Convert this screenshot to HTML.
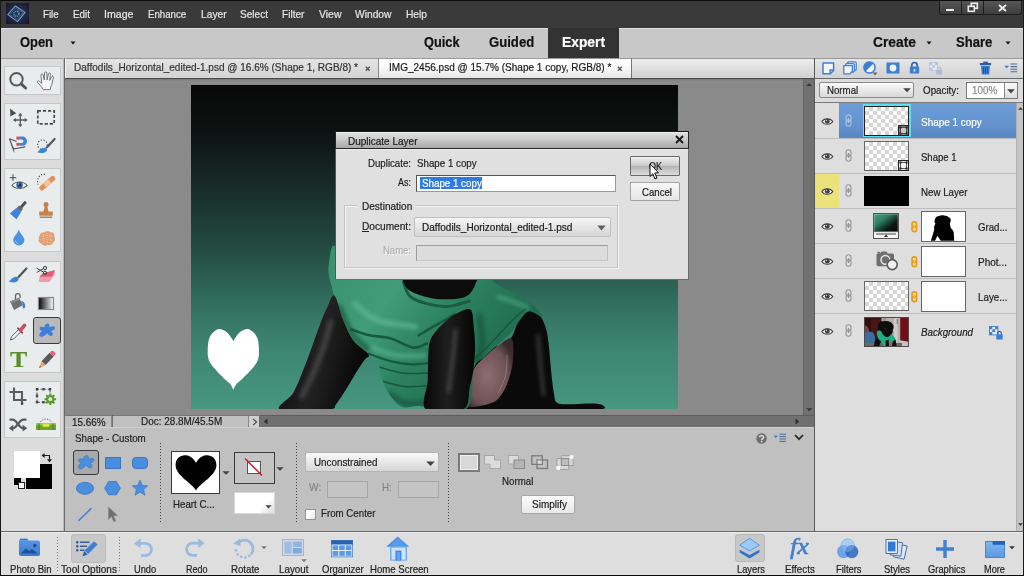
<!DOCTYPE html>
<html><head><meta charset="utf-8"><title>Photoshop Elements</title>
<style>
html,body{margin:0;padding:0;}
body{width:1024px;height:576px;overflow:hidden;position:relative;background:#8a8a8a;font-family:"Liberation Sans",sans-serif;}
.b{position:absolute;box-sizing:border-box;display:block;}
.t{position:absolute;white-space:pre;line-height:1;transform-origin:0 0;font-family:"Liberation Sans",sans-serif;-webkit-text-stroke:0.2px currentColor;}
</style></head><body>
<!-- p_base -->
<div class="b" style="left:0px;top:0px;width:1024px;height:28px;background:#3a3a3a;border-top:1px solid #1c1c1c;"></div>
<svg class="b" style="left:6px;top:2.5px;" width="23" height="21" viewBox="0 0 23 21"><defs><radialGradient id="lg" cx="0.5" cy="0.5" r="0.7"><stop offset="0" stop-color="#34365c"/><stop offset="1" stop-color="#15162c"/></radialGradient></defs><rect width="23" height="21" fill="url(#lg)"/><g fill="none"><polygon points="1.9,11.6 9.3,3 19,9.4 11.6,18.6" stroke="#6aa6c4" stroke-width="1.1"/><polygon points="4,11.4 9.6,5 16.9,9.8 11.3,16.4" stroke="#3f6f8e" stroke-width="0.7"/><circle cx="10.4" cy="10.7" r="2.6" stroke="#38a8ea" stroke-width="1.3" stroke-dasharray="1.3 0.8"/></g></svg>
<span class="t" style="left:43.00px;top:9px;font-size:10.9px;color:#e6e6e6;transform:scaleX(0.8939);">File</span>
<span class="t" style="left:72.50px;top:9px;font-size:10.9px;color:#e6e6e6;transform:scaleX(0.9051);">Edit</span>
<span class="t" style="left:103.75px;top:9px;font-size:10.9px;color:#e6e6e6;transform:scaleX(0.9737);">Image</span>
<span class="t" style="left:147.50px;top:9px;font-size:10.9px;color:#e6e6e6;transform:scaleX(0.8889);">Enhance</span>
<span class="t" style="left:201.25px;top:9px;font-size:10.9px;color:#e6e6e6;transform:scaleX(0.9444);">Layer</span>
<span class="t" style="left:240.00px;top:9px;font-size:10.9px;color:#e6e6e6;transform:scaleX(0.9242);">Select</span>
<span class="t" style="left:282.25px;top:9px;font-size:10.9px;color:#e6e6e6;transform:scaleX(0.9289);">Filter</span>
<span class="t" style="left:318.50px;top:9px;font-size:10.9px;color:#e6e6e6;transform:scaleX(0.9603);">View</span>
<span class="t" style="left:354.75px;top:9px;font-size:10.9px;color:#e6e6e6;transform:scaleX(0.9415);">Window</span>
<span class="t" style="left:405.50px;top:9px;font-size:10.9px;color:#e6e6e6;transform:scaleX(0.9367);">Help</span>
<div class="b" style="left:939px;top:0px;width:83px;height:15px;background:linear-gradient(#585858,#3e3e3e);border:1px solid #1a1a1a;border-top:none;border-radius:0 0 3px 3px;"></div>
<div class="b" style="left:961px;top:1px;width:1px;height:13px;background:#1e1e1e;"></div>
<div class="b" style="left:983px;top:1px;width:1px;height:13px;background:#1e1e1e;"></div>
<div class="b" style="left:946px;top:9px;width:8px;height:2px;background:#f0f0f0;"></div>
<svg class="b" style="left:967px;top:2px;" width="12" height="11" viewBox="0 0 12 11"><g fill="none" stroke="#f0f0f0" stroke-width="1.6"><rect x="4.3" y="1.3" width="6" height="5"/><rect x="1.3" y="4.3" width="6" height="5" fill="#3e3e3e"/></g></svg>
<svg class="b" style="left:997.7px;top:3.6px;" width="9" height="8" viewBox="0 0 9 8"><path d="M1,1 L8,7 M8,1 L1,7" stroke="#f0f0f0" stroke-width="1.9" fill="none"/></svg>
<div class="b" style="left:0px;top:28px;width:1024px;height:30px;background:#c8c8c8;border-top:1px solid #dedede;"></div>
<div class="b" style="left:548px;top:28px;width:71px;height:30px;background:#333;"></div>
<span class="t" style="left:19.50px;top:35px;font-size:14px;color:#111;transform:scaleX(0.9224);font-weight:bold;">Open</span>
<svg class="b" style="left:70px;top:41px;" width="6" height="4" viewBox="0 0 6 4"><polygon points="0.5,0.5 5.5,0.5 3,3.6" fill="#111"/></svg>
<span class="t" style="left:423.80px;top:35px;font-size:14px;color:#111;transform:scaleX(0.9126);font-weight:bold;">Quick</span>
<span class="t" style="left:489.30px;top:35px;font-size:14px;color:#111;transform:scaleX(0.9374);font-weight:bold;">Guided</span>
<span class="t" style="left:562.00px;top:35px;font-size:14px;color:#fff;transform:scaleX(0.9869);font-weight:bold;">Expert</span>
<span class="t" style="left:872.50px;top:35px;font-size:14px;color:#111;transform:scaleX(0.9867);font-weight:bold;">Create</span>
<svg class="b" style="left:926px;top:41px;" width="6" height="4" viewBox="0 0 6 4"><polygon points="0.5,0.5 5.5,0.5 3,3.6" fill="#111"/></svg>
<span class="t" style="left:955.50px;top:35px;font-size:14px;color:#111;transform:scaleX(0.9329);font-weight:bold;">Share</span>
<svg class="b" style="left:1005px;top:41px;" width="6" height="4" viewBox="0 0 6 4"><polygon points="0.5,0.5 5.5,0.5 3,3.6" fill="#111"/></svg>
<div class="b" style="left:0px;top:28px;width:1px;height:548px;background:#555;"></div>
<div class="b" style="left:65px;top:58px;width:749px;height:20px;background:linear-gradient(#ececec,#d2d2d2);border-top:1px solid #9a9a9a;"></div>
<div class="b" style="left:65px;top:58px;width:314px;height:20px;background:linear-gradient(#e4e4e4,#d4d4d4);border-top:1px solid #9a9a9a;border-right:1px solid #8a8a8a;border-left:1px solid #f4f4f4;"></div>
<div class="b" style="left:379px;top:58px;width:253px;height:20px;background:linear-gradient(#ffffff 30%,#e6e6e6);border-top:1px solid #9a9a9a;border-right:1px solid #777;"></div>
<span class="t" style="left:74.30px;top:62px;font-size:10.6px;color:#333;transform:scaleX(0.9477);">Daffodils_Horizontal_edited-1.psd @ 16.6% (Shape 1, RGB/8) *</span>
<span class="t" style="left:388.50px;top:62px;font-size:10.6px;color:#1a1a1a;transform:scaleX(0.9466);">IMG_2456.psd @ 15.7% (Shape 1 copy, RGB/8) *</span>
<svg class="b" style="left:365px;top:65.5px;" width="5.5" height="5.5" viewBox="0 0 5.5 5.5"><path d="M0.8,0.8 L4.7,4.7 M4.7,0.8 L0.8,4.7" stroke="#555" stroke-width="1.4" fill="none"/></svg>
<svg class="b" style="left:617.3px;top:65.5px;" width="5.5" height="5.5" viewBox="0 0 5.5 5.5"><path d="M0.8,0.8 L4.7,4.7 M4.7,0.8 L0.8,4.7" stroke="#555" stroke-width="1.4" fill="none"/></svg>
<div class="b" style="left:65px;top:78px;width:749px;height:1px;background:#4a4a4a;"></div>
<div class="b" style="left:65px;top:79px;width:738px;height:2px;background:linear-gradient(#777,#8a8a8a);"></div>
<!-- p_canvas -->
<svg class="b" style="left:191px;top:85px;" width="487" height="324" viewBox="0 0 487 324"><defs>
<linearGradient id="bg" x1="0" y1="0" x2="0" y2="1">
<stop offset="0" stop-color="#080808"/><stop offset="0.15" stop-color="#0d1312"/><stop offset="0.35" stop-color="#1a322c"/><stop offset="0.5" stop-color="#234a40"/><stop offset="0.65" stop-color="#306a5a"/><stop offset="0.8" stop-color="#3c8470"/><stop offset="1" stop-color="#48977f"/></linearGradient>
<linearGradient id="sw" x1="0" y1="0" x2="1" y2="0.6"><stop offset="0" stop-color="#38906e"/><stop offset="0.35" stop-color="#419c7a"/><stop offset="0.6" stop-color="#2c8060"/><stop offset="1" stop-color="#1d664c"/></linearGradient>
<linearGradient id="leg" x1="0" y1="0" x2="1" y2="0"><stop offset="0" stop-color="#070707"/><stop offset="0.45" stop-color="#1e1e1e"/><stop offset="1" stop-color="#060606"/></linearGradient>
<linearGradient id="leg2" x1="0" y1="0" x2="1" y2="0.3"><stop offset="0" stop-color="#050505"/><stop offset="0.55" stop-color="#222"/><stop offset="1" stop-color="#080808"/></linearGradient>
<radialGradient id="belly" cx="0.45" cy="0.55" r="0.6"><stop offset="0" stop-color="#8e6e70"/><stop offset="0.7" stop-color="#6e5256"/><stop offset="1" stop-color="#3a2a2c"/></radialGradient>
<filter id="bl" x="-20%" y="-20%" width="140%" height="140%"><feGaussianBlur stdDeviation="0.7"/></filter>
<filter id="bl2" x="-30%" y="-30%" width="160%" height="160%"><feGaussianBlur stdDeviation="2.2"/></filter>
<clipPath id="swc"><path d="M141.1,162.1 C139.6,164.6 138.8,171.9 138.2,176.2 C137.6,180.5 137.2,183.8 137.6,187.9 C138.0,192.1 139.6,197.2 140.6,201.1 C141.5,205.0 141.6,205.8 143.5,211.4 C145.4,217.0 148.9,227.5 152.0,234.8 C155.1,242.1 158.1,249.6 162.2,255.3 C166.4,261.1 172.7,265.5 176.9,269.4 C181.0,273.3 184.9,275.2 187.1,278.8 C189.3,282.3 188.9,286.6 190.1,290.5 C191.3,294.4 192.5,298.3 194.5,302.2 C196.4,306.1 198.9,310.6 201.8,313.9 C204.7,317.2 207.9,320.9 212.0,322.1 C216.2,323.3 221.8,320.8 226.7,320.9 C231.6,321.0 233.0,322.4 241.3,322.7 C249.6,323.0 269.6,329.3 276.5,322.7 C283.4,316.1 280.0,291.7 282.9,283.1 C285.9,274.6 290.3,275.2 294.1,271.4 C297.9,267.7 301.4,264.6 305.8,260.6 C310.2,256.5 316.5,251.4 320.4,247.1 C324.4,242.8 326.3,238.3 329.2,234.8 C332.2,231.3 334.4,226.8 338.0,226.3 C341.7,225.8 350.1,232.6 351.2,231.9 C352.3,231.1 347.2,224.8 344.5,221.9 C341.8,219.0 338.6,216.5 335.1,214.3 C331.6,212.1 327.3,210.4 323.4,208.4 C319.5,206.5 315.5,205.0 311.7,202.6 C307.8,200.1 302.7,198.2 300.5,193.8 C298.3,189.4 314.2,180.6 298.5,176.2 C282.8,171.8 231.3,169.9 206.2,167.4 C181.0,165.0 158.4,162.4 147.6,161.6 C136.8,160.7 142.7,159.7 141.1,162.1 Z"/></clipPath>
</defs>
<rect width="487" height="324" fill="url(#bg)"/>
<path fill="#0a0a0a" d="M314.6,258.2 C324.1,252.0 323.9,240.7 327.8,235.4 C331.7,230.1 334.6,227.1 338.0,226.3 C341.5,225.5 345.7,227.5 348.6,230.4 C351.4,233.3 353.5,238.5 355.0,243.6 C356.6,248.7 357.1,254.3 357.9,261.2 C358.8,268.0 359.2,276.8 360.0,284.6 C360.8,292.4 361.9,302.5 362.9,308.0 C364.0,313.6 363.3,316.2 366.4,318.0 C369.6,319.9 376.5,319.1 382.0,319.2 C387.5,319.3 394.8,318.5 399.5,318.6 C404.3,318.7 408.5,318.9 410.7,319.8 C412.8,320.6 415.8,322.8 412.4,323.9 C409.1,324.9 415.4,325.8 390.8,326.2 C366.2,326.6 284.8,335.1 264.8,326.2 C244.8,317.3 262.3,284.2 270.6,272.9 C278.9,261.6 305.1,264.5 314.6,258.2 Z"/><path fill="url(#belly)" d="M282.9,284.0 C285.5,278.9 290.0,275.6 294.1,271.7 C298.1,267.8 302.9,263.6 307.3,260.6 C311.7,257.6 318.0,251.5 320.4,253.6 C322.9,255.6 322.6,266.3 322.2,272.9 C321.8,279.5 320.1,287.3 318.1,293.4 C316.2,299.5 313.5,305.4 310.5,309.5 C307.5,313.7 305.6,316.4 299.9,318.3 C294.3,320.2 280.0,323.6 276.5,320.9 C273.0,318.3 277.8,308.3 278.8,302.2 C279.9,296.0 280.4,289.1 282.9,284.0 Z"/><path fill="none" stroke="#b49a9c" stroke-width="1" opacity="0.5" d="M316.1,270.0 C315.8,273.4 316.1,284.1 314.6,290.5 C313.1,296.8 308.5,305.1 307.3,308.0"/><path fill="url(#sw)" d="M141.1,162.1 C139.6,164.6 138.8,171.9 138.2,176.2 C137.6,180.5 137.2,183.8 137.6,187.9 C138.0,192.1 139.6,197.2 140.6,201.1 C141.5,205.0 141.6,205.8 143.5,211.4 C145.4,217.0 148.9,227.5 152.0,234.8 C155.1,242.1 158.1,249.6 162.2,255.3 C166.4,261.1 172.7,265.5 176.9,269.4 C181.0,273.3 184.9,275.2 187.1,278.8 C189.3,282.3 188.9,286.6 190.1,290.5 C191.3,294.4 192.5,298.3 194.5,302.2 C196.4,306.1 198.9,310.6 201.8,313.9 C204.7,317.2 207.9,320.9 212.0,322.1 C216.2,323.3 221.8,320.8 226.7,320.9 C231.6,321.0 233.0,322.4 241.3,322.7 C249.6,323.0 269.6,329.3 276.5,322.7 C283.4,316.1 280.0,291.7 282.9,283.1 C285.9,274.6 290.3,275.2 294.1,271.4 C297.9,267.7 301.4,264.6 305.8,260.6 C310.2,256.5 316.5,251.4 320.4,247.1 C324.4,242.8 326.3,238.3 329.2,234.8 C332.2,231.3 334.4,226.8 338.0,226.3 C341.7,225.8 350.1,232.6 351.2,231.9 C352.3,231.1 347.2,224.8 344.5,221.9 C341.8,219.0 338.6,216.5 335.1,214.3 C331.6,212.1 327.3,210.4 323.4,208.4 C319.5,206.5 315.5,205.0 311.7,202.6 C307.8,200.1 302.7,198.2 300.5,193.8 C298.3,189.4 314.2,180.6 298.5,176.2 C282.8,171.8 231.3,169.9 206.2,167.4 C181.0,165.0 158.4,162.4 147.6,161.6 C136.8,160.7 142.7,159.7 141.1,162.1 Z"/><g clip-path="url(#swc)"><g fill="none" stroke="#185840" filter="url(#bl)"><path stroke-width="2.2" d="M176.9,268.5 C180.8,269.8 193.0,274.6 200.3,276.4 C207.7,278.2 214.7,279.0 220.8,279.3 C226.9,279.6 234.3,278.4 237.0,278.2"/><path stroke-width="1.6" d="M187.1,281.7 C191.3,282.8 203.7,287.1 212.0,288.1 C220.3,289.2 232.8,288.1 237.0,288.1"/><path stroke-width="1.6" d="M191.5,296.3 C195.4,297.2 207.4,300.9 215.0,301.6 C222.5,302.3 233.3,300.9 237.0,300.7"/><path stroke-width="2.4" d="M226.7,250.9 C229.1,249.5 235.0,245.8 241.3,242.1 C247.7,238.5 260.9,231.1 264.8,228.9"/><path stroke-width="2.6" d="M159.3,243.9 C162.2,244.9 170.3,248.5 176.9,250.0 C183.5,251.6 191.5,251.2 199.2,253.3 C206.8,255.4 216.3,261.9 222.6,262.6 C228.8,263.4 234.3,258.7 236.7,257.9"/><path stroke-width="1.6" d="M284.7,272.9 C287.2,270.5 294.0,264.3 299.9,258.2 C305.9,252.1 314.6,242.1 320.4,236.3 C326.3,230.4 332.7,225.3 335.1,223.1"/><path stroke-width="3" stroke="#1a5c44" d="M212.0,195.3 C213.5,198.2 214.0,208.4 220.8,212.8 C227.7,217.2 243.3,221.1 253.1,221.6 C262.8,222.1 275.0,216.7 279.4,215.8"/></g><g fill="none" stroke="#6cc4a0" filter="url(#bl2)" opacity="0.6"><path stroke-width="5" d="M162.2,217.2 C166.1,220.2 174.9,230.7 185.7,234.8 C196.4,239.0 219.9,240.9 226.7,242.1"/><path stroke-width="4" d="M179.8,261.8 C184.2,263.2 196.9,269.1 206.2,270.5 C215.5,272.0 230.6,270.5 235.5,270.5"/><path stroke-width="3" d="M305.8,211.4 C308.7,212.3 318.0,215.3 323.4,217.2 C328.7,219.2 335.6,222.1 338.0,223.1"/></g><g fill="none" stroke="#16503a" filter="url(#bl2)" opacity="0.7"><path stroke-width="6" d="M147.6,220.2 C149.5,224.6 154.4,239.0 159.3,246.5 C164.2,254.1 174.0,262.4 176.9,265.6"/><path stroke-width="5" d="M197.4,308.0 C200.3,309.8 208.6,316.8 215.0,318.3 C221.3,319.8 232.1,317.1 235.5,316.8"/><path stroke-width="6" d="M288.2,228.9 C288.7,233.8 291.6,249.9 291.2,258.2 C290.7,266.5 286.3,275.3 285.3,278.8"/></g></g><path fill="#0c0c0c" d="M210.6,176.2 C197.8,179.1 210.2,189.0 211.5,193.8 C212.7,198.6 213.9,201.9 217.9,204.9 C221.9,207.9 229.6,210.4 235.5,212.0 C241.3,213.5 246.5,214.4 253.1,214.3 C259.7,214.2 269.8,214.1 275.0,211.4 C280.3,208.7 282.5,204.0 284.7,198.2 C286.9,192.3 300.6,179.9 288.2,176.2 C275.9,172.5 223.4,173.3 210.6,176.2 Z"/><path fill="url(#leg2)" d="M143.5,210.8 C140.8,208.8 138.4,218.1 135.9,223.1 C133.4,228.1 131.0,234.3 128.6,240.7 C126.1,247.0 123.9,253.8 121.2,261.2 C118.5,268.5 115.6,276.8 112.4,284.6 C109.3,292.4 106.1,301.4 102.2,308.0 C98.3,314.7 83.1,321.7 89.0,324.5 C94.9,327.2 128.0,325.4 137.3,324.5 C146.7,323.5 142.1,322.6 145.3,318.9 C148.4,315.2 152.7,308.0 156.4,302.2 C160.1,296.3 164.6,288.4 167.5,283.7 C170.4,279.1 172.3,276.7 174.0,274.4 C175.6,272.0 179.4,272.5 177.5,269.4 C175.5,266.2 166.5,261.1 162.2,255.3 C158.0,249.6 155.1,242.2 152.0,234.8 C148.9,227.4 146.2,212.7 143.5,210.8 Z"/><path fill="url(#leg)" d="M264.8,228.9 C269.2,226.7 276.4,222.1 279.4,224.6 C282.5,227.0 282.2,237.0 282.9,243.6 C283.7,250.2 284.2,257.3 284.1,264.1 C284.0,270.9 283.2,278.3 282.4,284.6 C281.5,291.0 280.6,295.5 278.8,302.2 C277.1,308.8 279.4,320.7 272.1,324.5 C264.8,328.2 240.8,329.1 234.9,324.5 C229.0,319.8 236.3,304.9 236.7,296.3 C237.0,287.7 237.0,279.2 237.2,272.9 C237.5,266.5 237.5,262.2 238.4,258.2 C239.3,254.2 240.4,252.3 242.8,248.9 C245.3,245.4 249.4,241.1 253.1,237.7 C256.7,234.4 260.4,231.1 264.8,228.9 Z"/><g fill="none" stroke="#4c4c4c" filter="url(#bl2)" opacity="0.85"><path stroke-width="5" d="M140.3,234.8 C139.0,239.2 136.1,251.9 132.9,261.2 C129.8,270.5 125.1,281.7 121.2,290.5 C117.3,299.3 111.5,310.0 109.5,313.9"/><path stroke-width="4" d="M264.8,243.6 C264.3,248.5 263.1,262.1 261.9,272.9 C260.6,283.6 258.2,302.2 257.5,308.0"/><path stroke-width="3" d="M346.8,249.5 C347.3,254.8 348.8,271.4 349.7,281.7 C350.7,291.9 352.2,306.1 352.7,311.0"/></g><path fill="#fff" d="M42.3,304.6 C41.8,303.8 40.7,300.9 39.6,299.5 C38.5,298.1 38.1,298.3 35.9,296.1 C33.7,293.9 28.9,289.3 26.2,286.4 C23.5,283.5 21.1,280.8 19.6,278.5 C18.1,276.2 17.7,274.6 17.2,272.5 C16.7,270.4 16.6,268.6 16.7,265.6 C16.8,262.6 17.0,257.4 17.9,254.4 C18.8,251.4 20.4,249.2 22.1,247.5 C23.8,245.8 26.1,244.1 28.3,244.0 C30.5,243.9 33.3,245.4 35.3,246.8 C37.3,248.2 38.9,250.9 40.1,252.4 C41.3,253.9 41.9,255.3 42.3,255.9 L42.4,255.9 C42.8,255.3 43.4,253.9 44.6,252.4 C45.8,250.9 47.4,248.2 49.4,246.8 C51.4,245.4 54.2,243.9 56.4,244.0 C58.6,244.1 60.9,245.8 62.6,247.5 C64.3,249.2 65.9,251.4 66.8,254.4 C67.7,257.4 67.9,262.6 68.0,265.6 C68.1,268.6 68.0,270.4 67.5,272.5 C67.0,274.6 66.6,276.2 65.1,278.5 C63.6,280.8 61.2,283.5 58.5,286.4 C55.8,289.3 51.0,293.9 48.8,296.1 C46.6,298.3 46.2,298.1 45.1,299.5 C44.0,300.9 42.9,303.8 42.4,304.6 Z"/></svg>
<div class="b" style="left:803px;top:79px;width:11px;height:336px;background:#717171;border-left:1px solid #656565;"></div>
<svg class="b" style="left:806px;top:83px;" width="6.4" height="3.4" viewBox="0 0 6.4 3.4"><polygon points="0.2,3.2 6.2,3.2 3.2,0.2" fill="#333"/></svg>
<svg class="b" style="left:806px;top:407.5px;" width="6.4" height="3.4" viewBox="0 0 6.4 3.4"><polygon points="0.2,0.2 6.2,0.2 3.2,3.2" fill="#333"/></svg>
<div class="b" style="left:65px;top:415px;width:749px;height:12px;background:#707070;border-top:1px solid #5c5c5c;"></div>
<div class="b" style="left:65px;top:415px;width:47px;height:12px;background:#c0c0c0;border-top:1px solid #777;border-right:1px solid #888;"></div>
<div class="b" style="left:113px;top:415px;width:136px;height:12px;background:#c0c0c0;border-top:1px solid #777;border-right:1px solid #888;"></div>
<div class="b" style="left:249px;top:415px;width:11px;height:12px;background:#d0d0d0;border-top:1px solid #777;border-right:1px solid #666;"></div>
<span class="t" style="left:72.00px;top:417px;font-size:11px;color:#222;transform:scaleX(0.8980);">15.66%</span>
<span class="t" style="left:141.30px;top:416px;font-size:10.6px;color:#222;transform:scaleX(0.9376);">Doc: 28.8M/45.5M</span>
<svg class="b" style="left:251.5px;top:418px;" width="6" height="8" viewBox="0 0 6 8"><polyline points="1,0.8 4.6,4 1,7.2" fill="none" stroke="#444" stroke-width="1.1"/></svg>
<svg class="b" style="left:263px;top:418px;" width="5" height="7" viewBox="0 0 5 7"><polygon points="4.5,0.5 4.5,6.5 0.8,3.5" fill="#2e2e2e"/></svg>
<svg class="b" style="left:795.3px;top:417.5px;" width="5" height="7" viewBox="0 0 5 7"><polygon points="0.5,0.5 0.5,6.5 4.2,3.5" fill="#2e2e2e"/></svg>
<div class="b" style="left:803px;top:416px;width:11px;height:11px;background:#707070;"></div>
<!-- p_tools -->
<div class="b" style="left:1px;top:58px;width:63px;height:473px;background:#dcdcdc;border-top:1px solid #9a9a9a;"></div>
<div class="b" style="left:64px;top:58px;width:1px;height:473px;background:#6a6a6a;"></div>
<div class="b" style="left:63px;top:58px;width:1px;height:473px;background:#b8b8b8;"></div>
<div class="b" style="left:4px;top:66px;width:57px;height:29px;background:#e8eced;border:1px solid #c6c8c8;"></div>
<div class="b" style="left:4px;top:103px;width:57px;height:57px;background:#e8eced;border:1px solid #c6c8c8;"></div>
<div class="b" style="left:4px;top:168px;width:57px;height:84px;background:#e8eced;border:1px solid #c6c8c8;"></div>
<div class="b" style="left:4px;top:261px;width:57px;height:112px;background:#e8eced;border:1px solid #c6c8c8;"></div>
<div class="b" style="left:4px;top:381px;width:57px;height:57px;background:#e8eced;border:1px solid #c6c8c8;"></div>
<svg class="b" style="left:8px;top:70px;" width="22" height="22" viewBox="0 0 22 22"><circle cx="8.5" cy="9.3" r="6.2" fill="none" stroke="#5a5a5a" stroke-width="2"/><path d="M13.4,14.2 L17.6,18" stroke="#555" stroke-width="3" stroke-linecap="round"/></svg>
<svg class="b" style="left:35px;top:70px;" width="22" height="22" viewBox="0 0 22 22"><g transform="translate(0.4,-0.2) scale(1.07)"><path d="M7.5,18.5 C6,16 3.5,13.5 2,12 C1.2,11 2.2,9.8 3.6,10.6 L6,12.6 L5.2,5 C5.1,3.6 7,3.4 7.3,4.8 L8.3,9.5 L8.6,3 C8.7,1.6 10.6,1.6 10.7,3 L10.9,9.4 L12.2,3.8 C12.5,2.5 14.3,2.9 14.1,4.2 L13.3,10 L15.2,6.4 C15.9,5.3 17.4,6.1 16.9,7.3 C16,10 15.8,13 14.5,15.5 L13.8,18.5 Z" fill="#f6f6f6" stroke="#6e6e6e" stroke-width="0.9" stroke-linejoin="round"/></g></svg>
<svg class="b" style="left:8px;top:106px;" width="22" height="24" viewBox="0 0 22 24"><polygon points="2,2.6 2.4,10.6 8.2,7.2" fill="#4e4e4e"/><g stroke="#555" stroke-width="1.3" fill="none"><path d="M12.3,8.5 V19.5 M6.6,14 H18"/></g><g fill="#555"><polygon points="12.3,6.8 10.2,9.8 14.4,9.8"/><polygon points="12.3,21.2 10.2,18.2 14.4,18.2"/><polygon points="4.9,14 7.9,11.9 7.9,16.1"/><polygon points="19.7,14 16.7,11.9 16.7,16.1"/></g></svg>
<svg class="b" style="left:36px;top:109px;" width="20" height="17" viewBox="0 0 20 17"><rect x="1.8" y="1.8" width="16.4" height="13" fill="none" stroke="#4a4a4a" stroke-width="1.7" stroke-dasharray="3.2 1.9"/></svg>
<svg class="b" style="left:8px;top:134px;" width="22" height="22" viewBox="0 0 22 22"><path d="M8.5,7.5 L1.5,4.8 L5.3,15 L17.2,12.9" stroke="#555" stroke-width="1.2" fill="none" stroke-linejoin="round"/><path d="M3.8,14 C5,13.2 6.6,14.4 5.6,15.6 C4.6,16.8 6,17.6 6.4,18" stroke="#444" stroke-width="1" fill="none"/><path d="M11.2,2.6 H14.4 A4.6,4.6 0 0 1 14.4,11.8 H11.2 V8.9 H14.2 A1.7,1.7 0 0 0 14.2,5.6 H11.2 Z" fill="#3c84d8"/><rect x="8.4" y="2.6" width="2.8" height="3" fill="#d8485a"/><rect x="8.4" y="8.9" width="2.8" height="2.9" fill="#d8485a"/></svg>
<svg class="b" style="left:35px;top:136px;" width="22" height="20" viewBox="0 0 22 20"><circle cx="7.4" cy="8.7" r="4.8" fill="none" stroke="#444" stroke-width="1.1" stroke-dasharray="1.2 1.7"/><path d="M19.6,3 L12,11.2" stroke="#5a5a5a" stroke-width="2.3" stroke-linecap="round"/><path d="M2,16.2 C3.6,15.4 4.4,13.6 6,12.8 C7.8,11.8 10.4,11.4 11.6,12.4 C12.6,13.4 12,15 10.6,16 C8.4,17.4 4.6,17.2 2,16.2 Z" fill="#3c84d8"/></svg>
<svg class="b" style="left:7.5px;top:173px;" width="22" height="20" viewBox="0 0 22 20"><path d="M5,1.4 V8 M1.7,4.7 H8.3" stroke="#444" stroke-width="1"/><path d="M4,12.3 C7.4,7.9 15.6,7.9 19,12.3 C15.6,16.4 7.4,16.4 4,12.3 Z" fill="#f4f6f6" stroke="#666" stroke-width="1.1"/><circle cx="11.6" cy="12" r="3.2" fill="#2d5f9c"/><circle cx="11.6" cy="12" r="1.4" fill="#16304f"/><circle cx="10.6" cy="11" r="0.8" fill="#9cc4ee"/></svg>
<svg class="b" style="left:35px;top:172px;" width="22" height="20" viewBox="0 0 22 20"><path d="M10,2.4 C4.4,1.6 1.4,7 3,12.6" fill="none" stroke="#444" stroke-width="1.1" stroke-dasharray="1.2 1.6"/><g transform="rotate(-41 12.3 11.2)"><rect x="2.6" y="8.6" width="19.4" height="5.2" rx="2.2" fill="#e8965e"/><rect x="9.2" y="8.6" width="6.2" height="5.2" fill="#f4c49c"/><path d="M5,10.2 v0.1 M5,12.2 v0.1 M7,11.2 v0.1 M19.6,10.2 v0.1 M19.6,12.2 v0.1 M17.6,11.2 v0.1" stroke="#c06a30" stroke-width="0.8" stroke-linecap="round"/></g></svg>
<svg class="b" style="left:8px;top:199px;" width="22" height="22" viewBox="0 0 22 22"><g transform="translate(17.4,3.3) rotate(41)"><rect x="-1.5" y="-0.8" width="3" height="8" rx="0.8" fill="#505050"/><path d="M-2.4,6.4 H2.4 L3,10.4 H-3 Z" fill="#6a6a6a"/><path d="M-3.2,10.2 H3.2 L4.3,18.6 H-4.3 Z" fill="#3c82de"/></g></svg>
<svg class="b" style="left:37px;top:200.6px;" width="18" height="19" viewBox="0 0 18 19"><circle cx="9" cy="3.6" r="2.5" fill="#c88048"/><path d="M7.9,5 H10.1 L11.6,11 H6.4 Z" fill="#c88048"/><rect x="2.2" y="10.4" width="13.6" height="4.4" rx="0.8" fill="#c98249"/><rect x="2.8" y="15.6" width="12.4" height="1.2" fill="#8a6e52"/></svg>
<svg class="b" style="left:11.5px;top:229px;" width="14" height="17" viewBox="0 0 14 17"><path d="M6.8,0.8 C8.2,5 12.4,8 12.4,11 A5.6,5.4 0 0 1 1.2,11 C1.2,8 5.4,5 6.8,0.8 Z" fill="#4a92e2"/><path d="M3.4,11.6 A3.4,3.4 0 0 0 6.2,14.6" stroke="#9cc8f4" stroke-width="0.9" fill="none"/></svg>
<svg class="b" style="left:37px;top:229.5px;" width="19" height="17" viewBox="0 0 19 17"><path d="M2.6,6 C2.6,3.4 5,2 7,2.6 C8.6,1 12,0.8 13.6,2.4 C16,2 18,4.2 17.2,6.6 C18.6,8.6 18,11.6 16,12.4 C15.6,14.6 12.8,15.8 10.8,14.8 C8.8,16.4 5.4,15.8 4.6,13.6 C2,13.2 0.8,10.4 2,8.6 C1.6,7.6 2,6.6 2.6,6 Z" fill="#dfa074"/><g fill="none" stroke="#f6d8b8" stroke-width="0.7" stroke-dasharray="0.8 1.3"><path d="M4,7 C7,4.6 12,4.6 15.6,7"/><path d="M3.4,10 C7,8 12,8.4 16,10.4"/><path d="M5.5,13 C8,11.4 12,11.8 14.4,13.2"/><path d="M9.6,3 C10.4,7 9.8,11 10.2,14.5"/><path d="M6.4,4 C6.8,7 6,10 6.6,13"/><path d="M13.4,4 C13.8,7 13.2,10 13.8,12.6"/></g></svg>
<svg class="b" style="left:7px;top:265px;" width="22" height="21" viewBox="0 0 22 21"><path d="M19.4,3.4 L11.8,11.8" stroke="#545454" stroke-width="2.2" stroke-linecap="round"/><path d="M1.6,16.6 C3.4,15.8 4,14 5.6,13 C7.4,11.8 10,11.2 11.2,12.2 C12.2,13.2 11.8,15 10.4,16.2 C8,17.8 4.4,17.6 1.6,16.6 Z" fill="#3c84d8"/></svg>
<svg class="b" style="left:35px;top:266px;" width="21" height="20" viewBox="0 0 21 20"><polygon points="7.6,7.4 19.8,4.2 17,10.4 4.6,10.8" fill="#e25c78"/><polygon points="4.6,10.8 17,10.4 19.8,4.2 19.8,8.4 14.4,16 3.8,16" fill="#ee9cae"/><polygon points="7.6,7.4 19.8,4.2 17,10.4 4.6,10.8" fill="#e25c78"/><g stroke="#3a3a3a" stroke-width="1" fill="none"><path d="M1.8,2.2 L8.6,6.2 M1.8,6.4 L8.6,2.4"/><circle cx="10" cy="2" r="1.6"/><circle cx="10" cy="6.8" r="1.6"/></g></svg>
<svg class="b" style="left:8px;top:292px;" width="20" height="20" viewBox="0 0 20 20"><path d="M7.5,8 V4 A2.3,2.3 0 0 1 12.1,4 V6" fill="none" stroke="#666" stroke-width="1.3"/><path d="M2,9.5 L11,5.8 L15,13 L6.2,18 Z" fill="#707070"/><path d="M2,9.5 L11,5.8 L12,7.6 L3,11.4 Z" fill="#8c8c8c"/><path d="M13,9 C15.5,9 17,11 17.2,13.5 C17.4,15.2 16.6,16.5 15.8,16.5 C15,16.5 14.4,15.4 14.6,13.6 C14.8,12 14.2,10.4 13,9 Z" fill="#3c7fd6"/></svg>
<svg class="b" style="left:37px;top:295.5px;" width="18" height="15" viewBox="0 0 18 15"><defs><linearGradient id="gg"><stop offset="0" stop-color="#000"/><stop offset="1" stop-color="#fff"/></linearGradient></defs><rect x="1.5" y="1.5" width="15" height="12" fill="url(#gg)" stroke="#8a8a8a" stroke-width="1.2"/></svg>
<svg class="b" style="left:8px;top:321px;" width="20" height="21" viewBox="0 0 20 21"><path d="M2.4,19 L3.6,15.6 L11,8.2 L13.2,10.4 L5.8,17.8 Z" fill="#f2f2f2" stroke="#606060" stroke-width="1" stroke-linejoin="round"/><path d="M10,7.4 L14.2,11.6" stroke="#a03a58" stroke-width="2" stroke-linecap="round"/><path d="M12.8,8.8 L15.6,5.6" stroke="#c8506c" stroke-width="3.6" stroke-linecap="round"/><circle cx="16.4" cy="4.4" r="1.9" fill="#c8506c"/></svg>
<div class="b" style="left:33px;top:317px;width:28px;height:27px;background:#b9b9b9;border:1px solid #3a3a3a;border-radius:3px;"></div>
<svg class="b" style="left:37px;top:322px;" width="20" height="17" viewBox="0 0 20 17"><path d="M9.5,1.8 C11.5,0.8 13,3 12.4,5.2 C14,5 16.5,3.4 17.8,5 C19,6.8 16.4,8.4 14.2,9 C15.5,10.5 16.8,12.4 15.2,13.6 C13.4,14.8 11.4,12.6 10.2,11.2 C8.6,12.8 5.8,15.8 3.2,14.6 C1,13.4 3.2,10.4 5.2,9 C3.6,8.4 2,7.4 2.6,5.8 C3.4,4 6.2,4.8 7.6,5.4 C7.4,4 7.8,2.6 9.5,1.8 Z" fill="#3c80dc"/></svg>
<span class="t" style="left:9.80px;top:348px;font-size:23px;color:#5c8c2a;transform:scaleX(1.1212);font-weight:bold;font-family:'Liberation Serif',serif;">T</span>
<svg class="b" style="left:35.5px;top:350.5px;" width="20" height="19" viewBox="0 0 20 19"><g transform="rotate(43 10 9.5)"><rect x="7.2" y="-2.4" width="5.6" height="3.8" rx="1.4" fill="#e8607c"/><rect x="7.2" y="1.4" width="5.6" height="11.6" fill="#585858"/><polygon points="7.2,13 12.8,13 10,19.6" fill="#e8a468"/><polygon points="9.1,17.4 10.9,17.4 10,19.8" fill="#a05a28"/></g></svg>
<svg class="b" style="left:8px;top:386px;" width="20" height="20" viewBox="0 0 20 20"><path d="M6,1.5 V14 H18.5 M1.5,6 H14 V18.5" fill="none" stroke="#5c5c5c" stroke-width="2.1"/><rect x="12.9" y="16.4" width="2.3" height="2.3" fill="#444"/></svg>
<svg class="b" style="left:35px;top:386.7px;" width="22" height="20" viewBox="0 0 22 20"><rect x="2" y="2.2" width="13" height="13" fill="none" stroke="#555" stroke-width="1.1" stroke-dasharray="2 1.6"/><g fill="#444"><rect x="0.8" y="1" width="2.4" height="2.4"/><rect x="13.8" y="1" width="2.4" height="2.4"/><rect x="0.8" y="14" width="2.4" height="2.4"/><rect x="7.3" y="1" width="2.4" height="2.4"/><rect x="0.8" y="7.5" width="2.4" height="2.4"/><rect x="7.3" y="14" width="2.4" height="2.4"/></g><g transform="translate(15.3,12.2)"><circle r="4.2" fill="#5a9a2a"/><g stroke="#5a9a2a" stroke-width="2"><path d="M0,-5.8 V5.8 M-5.8,0 H5.8 M-4.1,-4.1 L4.1,4.1 M-4.1,4.1 L4.1,-4.1"/></g><circle r="1.9" fill="#e8eced"/></g></svg>
<svg class="b" style="left:8px;top:416px;" width="20" height="17" viewBox="0 0 20 17"><g fill="none" stroke="#5c5c5c" stroke-width="2.3"><path d="M1.5,3.6 H4.6 C9,3.6 11,12.2 15,12.2 H15.5"/><path d="M18.5,3.6 H15.4 C11,3.6 9,12.2 5,12.2 H4.5"/></g><g fill="#555"><polygon points="19.2,12.2 14.6,8.8 14.6,15.6"/><polygon points="0.8,12.2 5.4,8.8 5.4,15.6"/></g></svg>
<svg class="b" style="left:35px;top:416.5px;" width="22" height="15" viewBox="0 0 22 15"><path d="M5.5,5 C8,1 14,1 16.5,5" fill="none" stroke="#555" stroke-width="0.9" stroke-dasharray="1.2 1.3"/><rect x="1" y="6.5" width="20" height="6.5" fill="#6aa62e"/><rect x="1" y="6.5" width="20" height="1.6" fill="#8cc44a"/><rect x="7.5" y="6.8" width="7" height="3" rx="1.4" fill="#f4e23c"/><path d="M4,6.5 v6.5 M18,6.5 v6.5" stroke="#4a7a1c" stroke-width="1"/></svg>
<div class="b" style="left:26px;top:464px;width:26px;height:25px;background:#000;"></div>
<div class="b" style="left:14px;top:451px;width:26px;height:27px;background:#fff;"></div>
<svg class="b" style="left:41px;top:452px;" width="12" height="11" viewBox="0 0 12 11"><path d="M2.5,3.5 H8.5 V8" fill="none" stroke="#222" stroke-width="1.2"/><polygon points="0.5,3.5 3.6,1 3.6,6" fill="#222"/><polygon points="8.5,10.5 6,7.2 11,7.2" fill="#222"/></svg>
<div class="b" style="left:14px;top:478px;width:7px;height:7px;background:#000;"></div>
<div class="b" style="left:18px;top:482px;width:7px;height:7px;background:#fff;border:1px solid #222;"></div>
<!-- p_options -->
<div class="b" style="left:65px;top:427px;width:749px;height:104px;background:#c0c0c0;border-top:1px solid #d0d0d0;"></div>
<span class="t" style="left:75.00px;top:433px;font-size:10.6px;color:#222;transform:scaleX(0.9244);">Shape - Custom</span>
<div class="b" style="left:73px;top:450px;width:26px;height:25px;background:#a9a9a9;border:1px solid #3a3a3a;border-radius:3px;"></div>
<svg class="b" style="left:76px;top:454px;" width="20" height="17" viewBox="0 0 20 17"><path d="M9.5,1.8 C11.5,0.8 13,3 12.4,5.2 C14,5 16.5,3.4 17.8,5 C19,6.8 16.4,8.4 14.2,9 C15.5,10.5 16.8,12.4 15.2,13.6 C13.4,14.8 11.4,12.6 10.2,11.2 C8.6,12.8 5.8,15.8 3.2,14.6 C1,13.4 3.2,10.4 5.2,9 C3.6,8.4 2,7.4 2.6,5.8 C3.4,4 6.2,4.8 7.6,5.4 C7.4,4 7.8,2.6 9.5,1.8 Z" fill="#4a8ee0" stroke="#3b74c0" stroke-width="0.6"/></svg>
<div class="b" style="left:104.5px;top:456.5px;width:16.5px;height:12.5px;background:#4a8ee0;border:1px solid #3b74c0;"></div>
<div class="b" style="left:132px;top:456.5px;width:16px;height:12.5px;background:#4a8ee0;border:1px solid #3b74c0;border-radius:4px;"></div>
<svg class="b" style="left:75px;top:481px;" width="20" height="15" viewBox="0 0 20 15"><ellipse cx="10" cy="7.3" rx="8.6" ry="6" fill="#4a8ee0" stroke="#3b74c0" stroke-width="0.8"/></svg>
<svg class="b" style="left:103px;top:480px;" width="19" height="16" viewBox="0 0 19 16"><polygon points="1.6,8.2 5.6,1.6 13.4,1.6 17.4,8.2 13.4,14.8 5.6,14.8" fill="#4a8ee0" stroke="#3b74c0" stroke-width="0.8"/></svg>
<svg class="b" style="left:131px;top:479px;" width="18" height="17" viewBox="0 0 18 17"><polygon points="9,1 11.3,6.3 17,6.8 12.7,10.6 14,16.2 9,13.2 4,16.2 5.3,10.6 1,6.8 6.7,6.3" fill="#4a8ee0" stroke="#3b74c0" stroke-width="0.6"/></svg>
<svg class="b" style="left:77px;top:507px;" width="16" height="15" viewBox="0 0 16 15"><path d="M1.5,13.8 L14.5,1.2" stroke="#3f7fd4" stroke-width="1.5"/></svg>
<svg class="b" style="left:107px;top:506px;" width="12" height="17" viewBox="0 0 12 17"><path d="M1.5,1 L1.5,13.5 L4.4,10.6 L6.8,15.8 L8.8,14.8 L6.4,9.8 L10.4,9.6 Z" fill="#6e6e6e" stroke="#8a8a8a" stroke-width="0.6"/></svg>
<div class="b" style="left:160px;top:443px;width:1px;height:80px;background:repeating-linear-gradient(#444 0,#444 1px,transparent 1px,transparent 3px);"></div>
<div class="b" style="left:296px;top:443px;width:1px;height:80px;background:repeating-linear-gradient(#444 0,#444 1px,transparent 1px,transparent 3px);"></div>
<div class="b" style="left:448px;top:443px;width:1px;height:80px;background:repeating-linear-gradient(#444 0,#444 1px,transparent 1px,transparent 3px);"></div>
<div class="b" style="left:171px;top:451px;width:49px;height:43px;background:#fff;border:1px solid #3a3a3a;"></div>
<svg class="b" style="left:173px;top:453px;" width="46" height="40" viewBox="0 0 46 40"><path d="M23,37.5 C19,30 3,23 2.6,12.5 C2.3,5 8,1.6 13,2.2 C17.8,2.8 21.5,6.5 23,10 C24.5,6.5 28.2,2.8 33,2.2 C38,1.6 43.7,5 43.4,12.5 C43,23 27,30 23,37.5 Z" fill="#000"/></svg>
<svg class="b" style="left:222px;top:471px;" width="8" height="4" viewBox="0 0 8 4"><polygon points="0.3,0.3 7.7,0.3 4,3.8" fill="#444"/></svg>
<span class="t" style="left:173.30px;top:499px;font-size:10.6px;color:#222;transform:scaleX(0.9194);">Heart C...</span>
<div class="b" style="left:234px;top:452px;width:41px;height:32px;background:#c4c4c4;border:1px solid #3a3a3a;"></div>
<div class="b" style="left:246.5px;top:460.5px;width:14.0px;height:13.5px;background:#fff;border:1px solid #555;"></div>
<svg class="b" style="left:243px;top:457px;" width="22" height="21" viewBox="0 0 22 21"><path d="M2,1.5 L19,18.5" stroke="#e01020" stroke-width="1.4"/></svg>
<svg class="b" style="left:276px;top:467px;" width="8" height="4" viewBox="0 0 8 4"><polygon points="0.3,0.3 7.7,0.3 4,3.8" fill="#444"/></svg>
<div class="b" style="left:234px;top:492px;width:40.5px;height:21.5px;background:#fff;border:1px solid #d8d8d8;"></div>
<div class="b" style="left:261px;top:499px;width:13px;height:14px;background:linear-gradient(135deg,#fff 30%,#dcdcdc);"></div>
<svg class="b" style="left:264.5px;top:504.5px;" width="7" height="4" viewBox="0 0 7 4"><polygon points="0.3,0.3 6.7,0.3 3.5,3.6" fill="#444"/></svg>
<div class="b" style="left:305px;top:452px;width:134px;height:20px;background:linear-gradient(#fafafa,#e4e4e4 60%,#d6d6d6);border:1px solid #b4b4b4;border-radius:2px;"></div>
<span class="t" style="left:313.50px;top:457px;font-size:10.6px;color:#222;transform:scaleX(0.9290);">Unconstrained</span>
<svg class="b" style="left:426px;top:460.5px;" width="9" height="5.5" viewBox="0 0 9 5.5"><polygon points="0.3,0.4 8.7,0.4 4.5,5" fill="#444"/></svg>
<span class="t" style="left:309.30px;top:482px;font-size:10.6px;color:#858585;transform:scaleX(0.9563);">W:</span>
<div class="b" style="left:327px;top:481px;width:41px;height:17px;background:#c4c4c4;border:1px solid #a6a6a6;"></div>
<span class="t" style="left:382.30px;top:482px;font-size:10.6px;color:#858585;transform:scaleX(0.9151);">H:</span>
<div class="b" style="left:398px;top:481px;width:40.5px;height:17px;background:#c4c4c4;border:1px solid #a6a6a6;"></div>
<div class="b" style="left:305px;top:509px;width:11px;height:11px;background:linear-gradient(135deg,#fff 40%,#e4e4e4);border:1px solid #949494;"></div>
<span class="t" style="left:321.30px;top:508px;font-size:10.6px;color:#222;transform:scaleX(0.9161);">From Center</span>
<div class="b" style="left:458px;top:452.5px;width:21.5px;height:19.0px;background:#d8d8d8;border:2px solid #7a7a7a;box-shadow:inset 0 0 0 1px #f0f0f0;"></div>
<svg class="b" style="left:484px;top:455px;" width="18" height="15" viewBox="0 0 18 15"><rect x="0.5" y="0.5" width="10" height="8.5" fill="#dcdcdc" stroke="#a8a8a8"/><rect x="6" y="5" width="10.5" height="8.5" fill="#dcdcdc" stroke="#a8a8a8"/><rect x="1" y="1" width="9" height="7.5" fill="#dcdcdc"/><rect x="6.5" y="5.5" width="4" height="3.5" fill="#dcdcdc"/></svg>
<svg class="b" style="left:508px;top:455px;" width="18" height="15" viewBox="0 0 18 15"><rect x="0.5" y="0.5" width="10" height="8.5" fill="#dcdcdc" stroke="#a8a8a8"/><rect x="6" y="5" width="10.5" height="8.5" fill="#b4b4b4" stroke="#8a8a8a"/></svg>
<svg class="b" style="left:531px;top:455px;" width="19" height="15" viewBox="0 0 19 15"><rect x="0.8" y="0.8" width="10.5" height="8.5" fill="none" stroke="#7a7a7a" stroke-width="1.3"/><rect x="6" y="5" width="10.5" height="8.5" fill="none" stroke="#7a7a7a" stroke-width="1.3"/><rect x="6.6" y="5.6" width="4" height="3" fill="#dcdcdc"/></svg>
<svg class="b" style="left:555.5px;top:454.5px;" width="19" height="16" viewBox="0 0 19 16"><rect x="1" y="3.5" width="11.7" height="10.9" fill="#d8d8d8" stroke="#a0a0a0"/><rect x="5.4" y="0.7" width="11.7" height="9.8" fill="#d8d8d8" stroke="#a0a0a0"/><rect x="5.4" y="3.5" width="7.3" height="7" fill="#bcbcbc" stroke="#8c8c8c"/><rect x="0.3" y="11" width="3.8" height="3.9" fill="#f8f8f8"/><rect x="13.7" y="0.2" width="3.9" height="3.5" fill="#f8f8f8"/></svg>
<span class="t" style="left:501.50px;top:476px;font-size:10.6px;color:#222;transform:scaleX(0.9163);">Normal</span>
<div class="b" style="left:521px;top:495px;width:54px;height:19px;background:linear-gradient(#fcfcfc,#e8e8e8);border:1px solid #a8a8a8;border-radius:2px;"></div>
<span class="t" style="left:531.50px;top:499px;font-size:10.6px;color:#222;transform:scaleX(0.9433);">Simplify</span>
<svg class="b" style="left:755.5px;top:432.5px;" width="11" height="11" viewBox="0 0 11 11"><circle cx="5.5" cy="5.5" r="5.2" fill="#6e6e6e"/><path d="M3.6,4.3 C3.6,2 7.6,2 7.6,4.3 C7.6,5.8 5.6,5.6 5.6,7.2" fill="none" stroke="#e8e8e8" stroke-width="1.4"/><rect x="4.9" y="8" width="1.4" height="1.4" fill="#e8e8e8"/></svg>
<svg class="b" style="left:773px;top:433px;" width="14" height="10" viewBox="0 0 14 10"><polygon points="0.5,2.5 5,2.5 2.75,5.2" fill="#3f7fd4"/><g stroke="#44689c" stroke-width="1"><path d="M6.5,1.2 H13 M6.5,3.6 H13 M6.5,6 H13 M6.5,8.4 H13"/></g></svg>
<svg class="b" style="left:794px;top:433.5px;" width="10" height="7" viewBox="0 0 10 7"><polyline points="1,1 5,5.2 9,1" fill="none" stroke="#2a2a2a" stroke-width="1.8"/></svg>
<!-- p_bottom -->
<div class="b" style="left:0px;top:531px;width:1024px;height:45px;background:#dedede;border-top:1px solid #6a6a6a;border-bottom:1px solid #1a1a1a;"></div>
<div class="b" style="left:0px;top:532px;width:1024px;height:1px;background:#ececec;"></div>
<div class="b" style="left:0px;top:531px;width:1px;height:45px;background:#555;"></div>
<svg class="b" style="left:18px;top:538px;" width="23" height="19" viewBox="0 0 23 19"><defs><linearGradient id="pb" x1="0" y1="0" x2="0" y2="1"><stop offset="0" stop-color="#5a9ae8"/><stop offset="1" stop-color="#3a78cc"/></linearGradient></defs><path d="M1,3 Q1,1.2 2.8,1.2 H9 Q10.4,1.2 10.6,2.6 H20.2 Q22,2.6 22,4.4 V16.2 Q22,18 20.2,18 H2.8 Q1,18 1,16.2 Z" fill="url(#pb)"/><path d="M2,1.2 H9.5" stroke="#2a5ea8" stroke-width="1"/><circle cx="16.8" cy="7.6" r="1.8" fill="#1f5096"/><path d="M3,15.5 L8,10.2 L11.2,13.2 L14,11 L19.5,15.5 Z" fill="#1f5096"/></svg>
<span class="t" style="left:9.70px;top:564px;font-size:10.6px;color:#222;transform:scaleX(0.9050);">Photo Bin</span>
<div class="b" style="left:57px;top:537px;width:1px;height:36px;background:repeating-linear-gradient(#777 0,#777 1px,transparent 1px,transparent 3px);"></div>
<div class="b" style="left:119px;top:537px;width:1px;height:36px;background:repeating-linear-gradient(#777 0,#777 1px,transparent 1px,transparent 3px);"></div>
<div class="b" style="left:70.5px;top:534px;width:35.0px;height:29px;background:#c8c8c8;border:1px solid #bcbcbc;border-radius:3px;"></div>
<svg class="b" style="left:75px;top:539px;" width="25" height="19" viewBox="0 0 25 19"><g stroke="#3a5f96" stroke-width="1.4"><path d="M5,3.2 H14.5 M5,7.2 H12 M5,11.2 H9.5"/></g><g fill="#2f5590"><circle cx="2.2" cy="3.2" r="1.2"/><circle cx="2.2" cy="7.2" r="1.2"/><circle cx="2.2" cy="11.2" r="1.2"/></g><path d="M19,2.2 L22.6,5.6 L13.2,15 L9.6,11.4 Z" fill="#3f80d6"/><path d="M9.2,12 L12.6,15.4 L7.4,17.4 Z" fill="#2a62b0"/></svg>
<span class="t" style="left:61.00px;top:564px;font-size:10.6px;color:#222;transform:scaleX(0.9504);">Tool Options</span>
<svg class="b" style="left:133px;top:538px;" width="22" height="21" viewBox="0 0 22 21"><path d="M7,5.4 H12.4 A6.1,6.1 0 0 1 12.4,17.6 H8" fill="none" stroke="#9bbadf" stroke-width="2.8"/><polygon points="1.1,5.4 7.6,0.5 7.6,10.3" fill="#9bbadf"/></svg>
<span class="t" style="left:133.80px;top:564px;font-size:10.6px;color:#222;transform:scaleX(0.8761);">Undo</span>
<svg class="b" style="left:184px;top:538px;" width="22" height="21" viewBox="0 0 22 21"><path d="M14.4,5.2 H8.6 A6.1,6.1 0 0 0 8.6,17.4 H13" fill="none" stroke="#9bbadf" stroke-width="2.8"/><polygon points="20.8,5.2 14.2,0.3 14.2,10.1" fill="#9bbadf"/></svg>
<span class="t" style="left:185.50px;top:564px;font-size:10.6px;color:#222;transform:scaleX(0.8484);">Redo</span>
<svg class="b" style="left:232px;top:537px;" width="24" height="24" viewBox="0 0 24 24"><path d="M6.87,5.21 A8.6,8.6 0 0 1 18.99,17.33" fill="none" stroke="#9bbadf" stroke-width="2.8"/><path d="M17.33,18.84 A8.6,8.6 0 0 1 3.83,11.05" fill="none" stroke="#9bbadf" stroke-width="2.6" stroke-dasharray="0.1 4.1" stroke-linecap="round"/><polygon points="1.2,6.4 8,1.4 8.6,9.2" fill="#9bbadf"/></svg>
<svg class="b" style="left:260.5px;top:545.5px;" width="6" height="3.5" viewBox="0 0 6 3.5"><polygon points="0.2,0.2 5.8,0.2 3,3.2" fill="#777"/></svg>
<span class="t" style="left:230.50px;top:564px;font-size:10.6px;color:#222;transform:scaleX(0.9125);">Rotate</span>
<svg class="b" style="left:281.5px;top:539px;" width="23" height="18" viewBox="0 0 23 18"><rect x="0.5" y="0.5" width="21" height="16" fill="#cfd8e4" stroke="#a9b4c4"/><rect x="2.5" y="2.5" width="7" height="12" fill="#9fbde4"/><rect x="10.8" y="2.5" width="9" height="5.4" fill="#8fb4e4"/><rect x="10.8" y="9" width="9" height="5.5" fill="#7ea8e0"/></svg>
<svg class="b" style="left:300.5px;top:558.5px;" width="6" height="3.5" viewBox="0 0 6 3.5"><polygon points="0.2,0.2 5.8,0.2 3,3.2" fill="#777"/></svg>
<span class="t" style="left:279.00px;top:564px;font-size:10.6px;color:#222;transform:scaleX(0.9269);">Layout</span>
<svg class="b" style="left:330.5px;top:540px;" width="22" height="17.5" viewBox="0 0 22 17.5"><rect x="0.3" y="0.3" width="21.4" height="16.6" fill="#e4eefa" stroke="#2a62b0" stroke-width="0.6"/><rect x="0.3" y="0.3" width="21.4" height="4.2" fill="#2a62b0"/><g fill="#5a9ae8"><rect x="1.6" y="5.4" width="5.6" height="4.6"/><rect x="8.2" y="5.4" width="5.6" height="4.6"/><rect x="14.8" y="5.4" width="5.6" height="4.6"/><rect x="1.6" y="11" width="5.6" height="4.8"/><rect x="8.2" y="11" width="5.6" height="4.8"/><rect x="14.8" y="11" width="5.6" height="4.8"/></g></svg>
<span class="t" style="left:321.70px;top:564px;font-size:10.6px;color:#222;transform:scaleX(0.8981);">Organizer</span>
<svg class="b" style="left:386px;top:536px;" width="24" height="25" viewBox="0 0 24 25"><polygon points="11.7,0.4 23.2,10.8 0.2,10.8" fill="#4a90e4"/><polygon points="11.7,2.6 19.4,9.6 4,9.6" fill="#5a9cec"/><rect x="4.1" y="10.6" width="16.9" height="14" fill="#6aa8f0"/><rect x="5.5" y="11.6" width="14.1" height="12" fill="#cfe2fa"/><rect x="9.4" y="14.6" width="6" height="9.9" fill="#3f88e4"/><rect x="10.8" y="16" width="3.2" height="8.5" fill="#62a4f0"/></svg>
<span class="t" style="left:369.80px;top:564px;font-size:10.6px;color:#222;transform:scaleX(0.9058);">Home Screen</span>
<div class="b" style="left:735px;top:534px;width:30px;height:28px;background:#c8c8c8;border:1px solid #b8b8b8;border-radius:3px;"></div>
<svg class="b" style="left:738px;top:537px;" width="24" height="23" viewBox="0 0 24 23"><polygon points="1.7,12.8 11.5,18.1 21.4,12.8 21.4,15.6 11.5,21.6 1.7,15.6" fill="#2f74cc"/><polygon points="11.5,1.2 21.4,8.2 11.5,13.9 1.7,8.2" fill="#9ccaf8" stroke="#4f90dc" stroke-width="0.9"/></svg>
<span class="t" style="left:737.00px;top:564px;font-size:10.6px;color:#222;transform:scaleX(0.8801);">Layers</span>
<span class="t" style="left:789.80px;top:534px;font-size:24px;color:#3f80d0;transform:scaleX(1.0853);font-style:italic;font-family:'Liberation Serif',serif;-webkit-text-stroke:0.6px #3f80d0;">fx</span>
<span class="t" style="left:785.00px;top:564px;font-size:10.6px;color:#222;transform:scaleX(0.9252);">Effects</span>
<svg class="b" style="left:836px;top:538px;" width="24" height="22" viewBox="0 0 24 22"><circle cx="11.6" cy="7.4" r="6.6" fill="#a8cdf6" stroke="#7fb0ea" stroke-width="0.8"/><circle cx="7.6" cy="13.6" r="6.6" fill="#5a9ae6" fill-opacity="0.85"/><circle cx="15.8" cy="13.6" r="6.6" fill="#2a68c0" fill-opacity="0.85"/><circle cx="11.6" cy="7.4" r="6.6" fill="#a8cdf6" fill-opacity="0.35"/></svg>
<span class="t" style="left:835.50px;top:564px;font-size:10.6px;color:#222;transform:scaleX(0.8837);">Filters</span>
<svg class="b" style="left:884px;top:538px;" width="25" height="23" viewBox="0 0 25 23"><g transform="rotate(13 16 14)"><rect x="10.6" y="6.6" width="11" height="13.5" fill="#dfe9f6" stroke="#4a6a9c" stroke-width="0.9"/></g><g transform="rotate(7 12 12)"><rect x="6.6" y="4" width="11" height="13.5" fill="#cfe0f6" stroke="#4a6a9c" stroke-width="0.9"/></g><rect x="2" y="1.6" width="11.4" height="13.8" fill="#eef4fc" stroke="#44628e" stroke-width="0.9"/><rect x="3.9" y="3.6" width="7.6" height="9.8" fill="#2f7bd4"/></svg>
<span class="t" style="left:884.00px;top:564px;font-size:10.6px;color:#222;transform:scaleX(0.9007);">Styles</span>
<svg class="b" style="left:936px;top:540px;" width="18" height="18" viewBox="0 0 18 18"><path d="M9,0 V18 M0,9 H18" stroke="#3f80d6" stroke-width="3.4"/></svg>
<span class="t" style="left:927.50px;top:564px;font-size:10.6px;color:#222;transform:scaleX(0.8841);">Graphics</span>
<svg class="b" style="left:984.5px;top:540.5px;" width="20" height="17" viewBox="0 0 20 17"><defs><linearGradient id="mo" x1="0" y1="0" x2="0" y2="1"><stop offset="0" stop-color="#82b6f0"/><stop offset="1" stop-color="#5a98e2"/></linearGradient></defs><rect x="0.5" y="0.5" width="19" height="16" fill="url(#mo)" stroke="#4a86d4" stroke-width="1"/><rect x="7.6" y="0" width="12.4" height="3.8" fill="#1f66b8"/></svg>
<svg class="b" style="left:1009px;top:546px;" width="6" height="3.5" viewBox="0 0 6 3.5"><polygon points="0.2,0.2 5.8,0.2 3,3.2" fill="#333"/></svg>
<span class="t" style="left:984.00px;top:564px;font-size:10.6px;color:#222;transform:scaleX(0.8696);">More</span>
<!-- p_panel -->
<div class="b" style="left:814px;top:58px;width:210px;height:473px;background:#dedede;border-left:1px solid #5a5a5a;"></div>
<div class="b" style="left:815px;top:58px;width:209px;height:20px;background:linear-gradient(#e6e6e6,#d2d2d2);border-top:1px solid #9a9a9a;"></div>
<div class="b" style="left:815px;top:78px;width:209px;height:1px;background:#6a6a6a;"></div>
<div class="b" style="left:815px;top:79px;width:209px;height:23px;background:#dcdcdc;"></div>
<div class="b" style="left:815px;top:102px;width:209px;height:1px;background:#7a7a7a;"></div>
<svg class="b" style="left:822px;top:62px;" width="13" height="13" viewBox="0 0 13 13"><path d="M1,1 H11.6 V8.4 L8.2,11.8 H1 Z" fill="#f4f8fc" stroke="#3f7fd0" stroke-width="1.5" stroke-linejoin="round"/><path d="M11.6,8 H8 V11.8" fill="none" stroke="#3f7fd0" stroke-width="1.3"/></svg>
<svg class="b" style="left:843px;top:61px;" width="14" height="14" viewBox="0 0 14 14"><g fill="#f4f8fc" stroke="#3f7fd0" stroke-width="1.3" stroke-linejoin="round"><rect x="4.6" y="0.8" width="8.6" height="8.4" rx="1"/><rect x="2.7" y="2.6" width="8.6" height="8.4" rx="1"/><path d="M0.8,4.6 H9.4 V10 L7,12.8 H0.8 Z"/></g></svg>
<svg class="b" style="left:863px;top:61px;" width="15" height="15" viewBox="0 0 15 15"><circle cx="6.5" cy="6.5" r="5.6" fill="#f4f8fc" stroke="#3f7fd0" stroke-width="1.5"/><path d="M2.5,10.5 A5.6,5.6 0 0 1 10.5,2.5 Z" fill="#3f7fd0"/><polygon points="9.5,11.5 14.5,11.5 12,14.5" fill="#666"/></svg>
<svg class="b" style="left:886px;top:62px;" width="14" height="12" viewBox="0 0 14 12"><rect x="0.5" y="0.5" width="13" height="11" fill="#3f7fd0"/><circle cx="7" cy="6" r="3.4" fill="#e8f0fa"/></svg>
<svg class="b" style="left:908.5px;top:61px;" width="11" height="13" viewBox="0 0 11 13"><path d="M2.8,6 V4.2 A2.7,2.7 0 0 1 8.2,4.2 V6" fill="none" stroke="#2a5ea8" stroke-width="1.6"/><rect x="0.8" y="5.6" width="9.4" height="7" rx="1" fill="#3f7fd0"/><rect x="4.7" y="8" width="1.6" height="2.6" fill="#cfe0f6"/></svg>
<svg class="b" style="left:929px;top:62px;" width="14" height="13" viewBox="0 0 14 13"><g fill="#b4c4dc"><rect x="0.5" y="0.5" width="8" height="8" fill="#e4eaf2" stroke="#b4c4dc" stroke-width="0.8"/><rect x="0.5" y="0.5" width="2.7" height="2.7"/><rect x="5.8" y="0.5" width="2.7" height="2.7"/><rect x="3.2" y="3.2" width="2.7" height="2.7"/><rect x="0.5" y="5.8" width="2.7" height="2.7"/></g><path d="M8.4,8 V7 A1.8,1.8 0 0 1 12,7 V8" fill="none" stroke="#a9bcd8" stroke-width="1.1"/><rect x="7.2" y="7.8" width="6" height="4.8" rx="0.6" fill="#a9bcd8"/></svg>
<svg class="b" style="left:978.5px;top:61px;" width="13" height="14" viewBox="0 0 13 14"><rect x="4.2" y="0.6" width="4.6" height="2" fill="#2a5ea8"/><rect x="0.8" y="2" width="11.4" height="2.2" rx="0.6" fill="#2a5ea8"/><path d="M2,5 H11 L10.2,13.4 H2.8 Z" fill="#3f7fd0"/><path d="M4.6,6 V12.4 M6.5,6 V12.4 M8.4,6 V12.4" stroke="#1f4a8c" stroke-width="0.9"/></svg>
<svg class="b" style="left:1003.5px;top:63px;" width="14" height="10" viewBox="0 0 14 10"><polygon points="0.3,2.8 5,2.8 2.65,5.6" fill="#3f7fd4"/><g stroke="#4a6890" stroke-width="1.1"><path d="M6.5,1 H13.2 M6.5,3.6 H13.2 M6.5,6.2 H13.2 M6.5,8.8 H13.2"/></g></svg>
<div class="b" style="left:819px;top:82px;width:95px;height:16px;background:linear-gradient(#fafafa,#e8e8e8 55%,#d8d8d8);border:1px solid #8a8a8a;border-radius:2px;"></div>
<span class="t" style="left:826.80px;top:85px;font-size:10.6px;color:#222;transform:scaleX(0.9134);">Normal</span>
<svg class="b" style="left:903px;top:88px;" width="8" height="4.5" viewBox="0 0 8 4.5"><polygon points="0.2,0.3 7.8,0.3 4,4.2" fill="#444"/></svg>
<span class="t" style="left:923.00px;top:85px;font-size:10.6px;color:#222;transform:scaleX(0.9259);">Opacity:</span>
<div class="b" style="left:966px;top:82px;width:52px;height:17px;background:#fff;border:1px solid #7a7a7a;"></div>
<div class="b" style="left:1003.5px;top:83px;width:13.5px;height:15px;background:linear-gradient(#fafafa,#dcdcdc);border-left:1px solid #8a8a8a;"></div>
<span class="t" style="left:971.80px;top:85px;font-size:11px;color:#8a8a8a;transform:scaleX(0.8958);">100%</span>
<svg class="b" style="left:1006.5px;top:88.5px;" width="8" height="5" viewBox="0 0 8 5"><polygon points="0.2,0.3 7.8,0.3 4,4.6" fill="#444"/></svg>
<div class="b" style="left:839px;top:103px;width:177px;height:35px;background:linear-gradient(#6c9dd7,#6595d1 55%,#5985c1);"></div>
<div class="b" style="left:815px;top:103px;width:24px;height:35px;background:#dedede;"></div>
<svg class="b" style="left:821px;top:117px;" width="13" height="9" viewBox="0 0 13 9"><path d="M0.8,4.5 C3.2,0.7 9.4,0.7 11.8,4.5 C9.4,8.2 3.2,8.2 0.8,4.5 Z" fill="#f4f4f4" stroke="#3c3c3c" stroke-width="1.05"/><circle cx="6.3" cy="4.2" r="2.4" fill="#3c3c3c"/><circle cx="5.6" cy="3.5" r="0.8" fill="#c4c4c4"/></svg>
<svg class="b" style="left:845px;top:114.4px;" width="7" height="13" viewBox="0 0 7 13"><rect x="1" y="0.8" width="5" height="6.4" rx="2.4" fill="none" stroke="#a9c4e6" stroke-width="1.1"/><rect x="1" y="5.8" width="5" height="6.4" rx="2.4" fill="none" stroke="#a9c4e6" stroke-width="1.1"/><path d="M3.5,4 V9" stroke="#a9c4e6" stroke-width="1.1"/></svg>
<div class="b" style="left:839px;top:138px;width:177px;height:35px;background:#dedede;border-top:1px solid #bdbdbd;"></div>
<div class="b" style="left:815px;top:138px;width:24px;height:35px;background:#dedede;border-top:1px solid #bdbdbd;"></div>
<svg class="b" style="left:821px;top:152px;" width="13" height="9" viewBox="0 0 13 9"><path d="M0.8,4.5 C3.2,0.7 9.4,0.7 11.8,4.5 C9.4,8.2 3.2,8.2 0.8,4.5 Z" fill="#f4f4f4" stroke="#3c3c3c" stroke-width="1.05"/><circle cx="6.3" cy="4.2" r="2.4" fill="#3c3c3c"/><circle cx="5.6" cy="3.5" r="0.8" fill="#c4c4c4"/></svg>
<svg class="b" style="left:845px;top:149.4px;" width="7" height="13" viewBox="0 0 7 13"><rect x="1" y="0.8" width="5" height="6.4" rx="2.4" fill="none" stroke="#959595" stroke-width="1.1"/><rect x="1" y="5.8" width="5" height="6.4" rx="2.4" fill="none" stroke="#959595" stroke-width="1.1"/><path d="M3.5,4 V9" stroke="#959595" stroke-width="1.1"/></svg>
<div class="b" style="left:839px;top:173px;width:177px;height:35px;background:#dedede;border-top:1px solid #bdbdbd;"></div>
<div class="b" style="left:815px;top:173px;width:24px;height:35px;background:#ebe37a;border-top:1px solid #bdbdbd;"></div>
<svg class="b" style="left:821px;top:187px;" width="13" height="9" viewBox="0 0 13 9"><path d="M0.8,4.5 C3.2,0.7 9.4,0.7 11.8,4.5 C9.4,8.2 3.2,8.2 0.8,4.5 Z" fill="#f4f4f4" stroke="#3c3c3c" stroke-width="1.05"/><circle cx="6.3" cy="4.2" r="2.4" fill="#3c3c3c"/><circle cx="5.6" cy="3.5" r="0.8" fill="#c4c4c4"/></svg>
<svg class="b" style="left:845px;top:184.4px;" width="7" height="13" viewBox="0 0 7 13"><rect x="1" y="0.8" width="5" height="6.4" rx="2.4" fill="none" stroke="#959595" stroke-width="1.1"/><rect x="1" y="5.8" width="5" height="6.4" rx="2.4" fill="none" stroke="#959595" stroke-width="1.1"/><path d="M3.5,4 V9" stroke="#959595" stroke-width="1.1"/></svg>
<div class="b" style="left:839px;top:208px;width:177px;height:35px;background:#dedede;border-top:1px solid #bdbdbd;"></div>
<div class="b" style="left:815px;top:208px;width:24px;height:35px;background:#dedede;border-top:1px solid #bdbdbd;"></div>
<svg class="b" style="left:821px;top:222px;" width="13" height="9" viewBox="0 0 13 9"><path d="M0.8,4.5 C3.2,0.7 9.4,0.7 11.8,4.5 C9.4,8.2 3.2,8.2 0.8,4.5 Z" fill="#f4f4f4" stroke="#3c3c3c" stroke-width="1.05"/><circle cx="6.3" cy="4.2" r="2.4" fill="#3c3c3c"/><circle cx="5.6" cy="3.5" r="0.8" fill="#c4c4c4"/></svg>
<svg class="b" style="left:845px;top:219.4px;" width="7" height="13" viewBox="0 0 7 13"><rect x="1" y="0.8" width="5" height="6.4" rx="2.4" fill="none" stroke="#959595" stroke-width="1.1"/><rect x="1" y="5.8" width="5" height="6.4" rx="2.4" fill="none" stroke="#959595" stroke-width="1.1"/><path d="M3.5,4 V9" stroke="#959595" stroke-width="1.1"/></svg>
<div class="b" style="left:839px;top:243px;width:177px;height:35px;background:#dedede;border-top:1px solid #bdbdbd;"></div>
<div class="b" style="left:815px;top:243px;width:24px;height:35px;background:#dedede;border-top:1px solid #bdbdbd;"></div>
<svg class="b" style="left:821px;top:257px;" width="13" height="9" viewBox="0 0 13 9"><path d="M0.8,4.5 C3.2,0.7 9.4,0.7 11.8,4.5 C9.4,8.2 3.2,8.2 0.8,4.5 Z" fill="#f4f4f4" stroke="#3c3c3c" stroke-width="1.05"/><circle cx="6.3" cy="4.2" r="2.4" fill="#3c3c3c"/><circle cx="5.6" cy="3.5" r="0.8" fill="#c4c4c4"/></svg>
<svg class="b" style="left:845px;top:254.4px;" width="7" height="13" viewBox="0 0 7 13"><rect x="1" y="0.8" width="5" height="6.4" rx="2.4" fill="none" stroke="#959595" stroke-width="1.1"/><rect x="1" y="5.8" width="5" height="6.4" rx="2.4" fill="none" stroke="#959595" stroke-width="1.1"/><path d="M3.5,4 V9" stroke="#959595" stroke-width="1.1"/></svg>
<div class="b" style="left:839px;top:278px;width:177px;height:35px;background:#dedede;border-top:1px solid #bdbdbd;"></div>
<div class="b" style="left:815px;top:278px;width:24px;height:35px;background:#dedede;border-top:1px solid #bdbdbd;"></div>
<svg class="b" style="left:821px;top:292px;" width="13" height="9" viewBox="0 0 13 9"><path d="M0.8,4.5 C3.2,0.7 9.4,0.7 11.8,4.5 C9.4,8.2 3.2,8.2 0.8,4.5 Z" fill="#f4f4f4" stroke="#3c3c3c" stroke-width="1.05"/><circle cx="6.3" cy="4.2" r="2.4" fill="#3c3c3c"/><circle cx="5.6" cy="3.5" r="0.8" fill="#c4c4c4"/></svg>
<svg class="b" style="left:845px;top:289.4px;" width="7" height="13" viewBox="0 0 7 13"><rect x="1" y="0.8" width="5" height="6.4" rx="2.4" fill="none" stroke="#959595" stroke-width="1.1"/><rect x="1" y="5.8" width="5" height="6.4" rx="2.4" fill="none" stroke="#959595" stroke-width="1.1"/><path d="M3.5,4 V9" stroke="#959595" stroke-width="1.1"/></svg>
<div class="b" style="left:839px;top:313px;width:177px;height:35px;background:#dedede;border-top:1px solid #bdbdbd;"></div>
<div class="b" style="left:815px;top:313px;width:24px;height:35px;background:#dedede;border-top:1px solid #bdbdbd;"></div>
<svg class="b" style="left:821px;top:327px;" width="13" height="9" viewBox="0 0 13 9"><path d="M0.8,4.5 C3.2,0.7 9.4,0.7 11.8,4.5 C9.4,8.2 3.2,8.2 0.8,4.5 Z" fill="#f4f4f4" stroke="#3c3c3c" stroke-width="1.05"/><circle cx="6.3" cy="4.2" r="2.4" fill="#3c3c3c"/><circle cx="5.6" cy="3.5" r="0.8" fill="#c4c4c4"/></svg>
<svg class="b" style="left:845px;top:324.4px;" width="7" height="13" viewBox="0 0 7 13"><rect x="1" y="0.8" width="5" height="6.4" rx="2.4" fill="none" stroke="#959595" stroke-width="1.1"/><rect x="1" y="5.8" width="5" height="6.4" rx="2.4" fill="none" stroke="#959595" stroke-width="1.1"/><path d="M3.5,4 V9" stroke="#959595" stroke-width="1.1"/></svg>
<div class="b" style="left:862.5px;top:104px;width:48.0px;height:33px;background:#5fe0f2;"></div>
<div class="b" style="left:864px;top:105.5px;width:45px;height:30.0px;background-color:#fff;background-image:linear-gradient(45deg,#d6d6d6 25%,transparent 25%,transparent 75%,#d6d6d6 75%),linear-gradient(45deg,#d6d6d6 25%,transparent 25%,transparent 75%,#d6d6d6 75%);background-size:8px 8px;background-position:0 0,4px 4px;border:1px solid #222;"></div>
<svg class="b" style="left:898px;top:124.5px;" width="11" height="11" viewBox="0 0 11 11"><rect x="0.5" y="0.5" width="10" height="10" fill="#8a8a8a" stroke="#222"/><rect x="2.6" y="2.6" width="5.8" height="5.8" fill="#c8c8c8" stroke="#333" stroke-width="0.8"/><g fill="#222"><rect x="1.4" y="1.4" width="2" height="2"/><rect x="7.6" y="1.4" width="2" height="2"/><rect x="1.4" y="7.6" width="2" height="2"/><rect x="7.6" y="7.6" width="2" height="2"/></g></svg>
<svg class="b" style="left:866px;top:128px;" width="5" height="6" viewBox="0 0 5 6"><path d="M2.5,5.6 C1.5,4 0.2,3.2 0.3,1.6 C0.4,0.4 1.8,0.2 2.5,1.3 C3.2,0.2 4.6,0.4 4.7,1.6 C4.8,3.2 3.5,4 2.5,5.6 Z" fill="#fff"/></svg>
<svg class="b" style="left:866px;top:163px;" width="5" height="6" viewBox="0 0 5 6"><path d="M2.5,5.6 C1.5,4 0.2,3.2 0.3,1.6 C0.4,0.4 1.8,0.2 2.5,1.3 C3.2,0.2 4.6,0.4 4.7,1.6 C4.8,3.2 3.5,4 2.5,5.6 Z" fill="#fff"/></svg>
<span class="t" style="left:921.00px;top:117px;font-size:10.6px;color:#fff;transform:scaleX(0.9379);">Shape 1 copy</span>
<div class="b" style="left:864px;top:141px;width:45px;height:30px;background-color:#fff;background-image:linear-gradient(45deg,#d6d6d6 25%,transparent 25%,transparent 75%,#d6d6d6 75%),linear-gradient(45deg,#d6d6d6 25%,transparent 25%,transparent 75%,#d6d6d6 75%);background-size:8px 8px;background-position:0 0,4px 4px;border:1px solid #666;"></div>
<svg class="b" style="left:898px;top:160px;" width="11" height="11" viewBox="0 0 11 11"><rect x="0.5" y="0.5" width="10" height="10" fill="#e8e8e8" stroke="#222"/><rect x="2.6" y="2.6" width="5.8" height="5.8" fill="#f4f4f4" stroke="#333" stroke-width="0.8"/><g fill="#222"><rect x="1.4" y="1.4" width="2" height="2"/><rect x="7.6" y="1.4" width="2" height="2"/><rect x="1.4" y="7.6" width="2" height="2"/><rect x="7.6" y="7.6" width="2" height="2"/></g></svg>
<span class="t" style="left:921.00px;top:152px;font-size:10.6px;color:#222;transform:scaleX(0.8989);">Shape 1</span>
<div class="b" style="left:864px;top:176px;width:45px;height:30px;background:#000;"></div>
<span class="t" style="left:921.00px;top:187px;font-size:10.6px;color:#222;transform:scaleX(0.9178);">New Layer</span>
<svg class="b" style="left:873.3px;top:213px;" width="26" height="26" viewBox="0 0 26 26"><defs><linearGradient id="ga" x1="0" y1="0" x2="1" y2="1"><stop offset="0" stop-color="#4aa586"/><stop offset="0.35" stop-color="#2f7a62"/><stop offset="0.7" stop-color="#0c1814"/><stop offset="1" stop-color="#050505"/></linearGradient></defs><rect x="0.5" y="0.5" width="25" height="25" fill="#f6f6f6" stroke="#555"/><rect x="1.2" y="1.2" width="23.6" height="17.2" fill="url(#ga)"/><path d="M0.5,18.6 H25.5" stroke="#555" stroke-width="0.9"/><path d="M3,21 H23" stroke="#333" stroke-width="0.9"/><polygon points="13,21.6 15,24 11,24" fill="#222"/></svg>
<svg class="b" style="left:910.8px;top:221px;" width="7" height="12" viewBox="0 0 7 12"><rect x="1" y="0.9" width="4.6" height="5.6" rx="2.2" fill="none" stroke="#e89a14" stroke-width="1.6"/><rect x="1" y="5" width="4.6" height="5.6" rx="2.2" fill="none" stroke="#e89a14" stroke-width="1.6"/><path d="M3.3,3 V8.4" stroke="#f6c860" stroke-width="1.2"/></svg>
<div class="b" style="left:920.5px;top:211px;width:45.5px;height:30.5px;background:#fff;border:1px solid #666;"></div>
<svg class="b" style="left:920.7px;top:211px;" width="45" height="30.5" viewBox="0 0 45 30.5"><path d="M9.9,29.8 L13.2,18.7 C12.8,16.5 13.2,14.5 14.5,12.8 C13.2,11.5 13.2,9 14.5,6.9 C15.2,5.6 16.5,5 17.8,4.9 C19.5,4.2 21.5,4.2 23.1,4.5 C25,4.6 26.8,5.2 27.7,6.2 C29.2,6.8 30,7.8 29.7,8.8 C30,10 29.5,11.4 28.8,12.1 C29,14 29.4,16 30.1,17.4 C31.4,18.4 32.4,19.8 32.7,21.4 L33.2,29.8 L19.7,29.8 L16.4,24.7 L14.1,29.8 Z" fill="#000"/></svg>
<span class="t" style="left:977.50px;top:222px;font-size:10.6px;color:#222;transform:scaleX(0.9104);">Grad...</span>
<svg class="b" style="left:875.3px;top:250px;" width="25" height="22" viewBox="0 0 25 22"><path d="M1.5,5.2 Q1.5,3.6 3.2,3.6 H5.2 L6.6,1.4 H11.4 L12.8,3.6 H17.4 Q19,3.6 19,5.2 V14.6 Q19,16.2 17.4,16.2 H3.2 Q1.5,16.2 1.5,14.6 Z" fill="#6e6e6e"/><rect x="2.4" y="1.8" width="2.8" height="1.8" fill="#6e6e6e"/><circle cx="10.4" cy="9.8" r="4.4" fill="#6e6e6e" stroke="#e8e8e8" stroke-width="1.5"/><circle cx="17.2" cy="14.6" r="5" fill="#f0f0f0" stroke="#5a5a5a" stroke-width="1.6"/></svg>
<svg class="b" style="left:910.8px;top:256px;" width="7" height="12" viewBox="0 0 7 12"><rect x="1" y="0.9" width="4.6" height="5.6" rx="2.2" fill="none" stroke="#e89a14" stroke-width="1.6"/><rect x="1" y="5" width="4.6" height="5.6" rx="2.2" fill="none" stroke="#e89a14" stroke-width="1.6"/><path d="M3.3,3 V8.4" stroke="#f6c860" stroke-width="1.2"/></svg>
<div class="b" style="left:920.5px;top:246px;width:45.5px;height:30.5px;background:#fff;border:1px solid #666;"></div>
<span class="t" style="left:977.50px;top:257px;font-size:10.6px;color:#222;transform:scaleX(0.9464);">Phot...</span>
<div class="b" style="left:864px;top:281px;width:45px;height:30px;background-color:#fff;background-image:linear-gradient(45deg,#d6d6d6 25%,transparent 25%,transparent 75%,#d6d6d6 75%),linear-gradient(45deg,#d6d6d6 25%,transparent 25%,transparent 75%,#d6d6d6 75%);background-size:8px 8px;background-position:0 0,4px 4px;border:1px solid #666;"></div>
<svg class="b" style="left:910.8px;top:291px;" width="7" height="12" viewBox="0 0 7 12"><rect x="1" y="0.9" width="4.6" height="5.6" rx="2.2" fill="none" stroke="#e89a14" stroke-width="1.6"/><rect x="1" y="5" width="4.6" height="5.6" rx="2.2" fill="none" stroke="#e89a14" stroke-width="1.6"/><path d="M3.3,3 V8.4" stroke="#f6c860" stroke-width="1.2"/></svg>
<div class="b" style="left:920.5px;top:281px;width:45.5px;height:30.5px;background:#fff;border:1px solid #666;"></div>
<span class="t" style="left:977.50px;top:292px;font-size:10.6px;color:#222;transform:scaleX(0.9270);">Laye...</span>
<svg class="b" style="left:864px;top:317px;" width="45" height="30" viewBox="0 0 45 30"><defs><filter id="tb" x="-10%" y="-10%" width="120%" height="120%"><feGaussianBlur stdDeviation="0.45"/></filter><clipPath id="tc"><rect width="45" height="30"/></clipPath></defs><g clip-path="url(#tc)"><g filter="url(#tb)"><rect x="-2" y="-2" width="49" height="34" fill="#34090c"/><rect x="7" y="2" width="11" height="24" fill="#4a1418"/><rect x="17.5" y="-2" width="19" height="30" fill="#b4b0ac"/><rect x="19" y="-2" width="3" height="28" fill="#9a9692"/><rect x="30" y="-2" width="3.5" height="28" fill="#cfccc8"/><rect x="32.5" y="2" width="1.6" height="5" fill="#8a94a4"/><rect x="36.5" y="-2" width="10" height="28" fill="#741014"/><path d="M34.5,23 L46,25 L46,30 L38,29 Z" fill="#c4c4c8"/><rect x="-2" y="26" width="40" height="6" fill="#6e675a"/><path d="M-1,8 C3,8 5,11 5,14 L4,18 L-1,18 Z" fill="#7a4648"/><path d="M-1,17 C3,14 8,13.5 10,17 C11.5,20 11.5,24 10,26 L-1,26 Z" fill="#3c6c9c"/><path d="M14,9 C14,5.5 17,3.8 20,4.3 C23,3.6 27,4.4 28.5,7 C30,8.5 29.8,11 28.8,12.5 C29,15 28,17.5 26.5,19.5 L24,22 L17,20 L15.5,17 C14,14.5 13.6,11.5 14,9 Z" fill="#0b0b0b"/><path d="M12.8,15 C14,13.4 16.3,13.2 17.3,14.2 C18,17 20,19.5 23,20.2 C25,20 26.3,18.5 27,17 C29,18 31,20 31.4,22.2 C31,24 29.6,25 28,25.4 C27.4,27 26.6,28.6 25.6,29.4 L19.5,29.4 C18.8,27.6 18.2,26 17.6,24.6 C15,23 13,20.5 12.8,15 Z" fill="#1eb084"/><path d="M12.6,20.5 C13.6,21.6 15,23.4 16.4,24.4 L15.4,29.6 L9.4,29.6 Z" fill="#0b0b0b"/><path d="M21.6,23.5 L24.6,22.6 L25,29.6 L21.8,29.6 Z" fill="#0b0b0b"/><path d="M28.6,24.4 L31.6,22.6 L32.6,29.6 L28.2,29.6 Z" fill="#0b0b0b"/><rect x="25.8" y="25" width="2" height="3.4" fill="#8a6a70"/><circle cx="21" cy="11.5" r="1" fill="#2a2a2a"/></g></g><rect x="0.5" y="0.5" width="44" height="29" fill="none" stroke="#4a4a4a"/></svg>
<span class="t" style="left:921.00px;top:327px;font-size:10.6px;color:#222;transform:scaleX(0.9192);font-style:italic;">Background</span>
<svg class="b" style="left:989px;top:326px;" width="14" height="14" viewBox="0 0 14 14"><g fill="#3f7fd0"><rect x="0.5" y="0.5" width="8.4" height="8.4" fill="#e8f0fa" stroke="#3f7fd0" stroke-width="0.9"/><rect x="0.5" y="0.5" width="2.8" height="2.8"/><rect x="6.1" y="0.5" width="2.8" height="2.8"/><rect x="3.3" y="3.3" width="2.8" height="2.8"/><rect x="0.5" y="6.1" width="2.8" height="2.8"/></g><path d="M8.6,8.4 V7.2 A1.9,1.9 0 0 1 12.4,7.2 V8.4" fill="none" stroke="#2a5ea8" stroke-width="1.2"/><rect x="7.3" y="8.2" width="6.4" height="5.2" rx="0.6" fill="#3f7fd0"/></svg>
<div class="b" style="left:1016px;top:103px;width:8px;height:428px;background:#c4c4c4;border-left:1px solid #b0b0b0;"></div>
<svg class="b" style="left:1017.5px;top:106.5px;" width="5" height="3" viewBox="0 0 5 3"><polygon points="0.2,2.8 4.8,2.8 2.5,0.3" fill="#333"/></svg>
<svg class="b" style="left:1017.5px;top:523px;" width="5" height="3" viewBox="0 0 5 3"><polygon points="0.2,0.2 4.8,0.2 2.5,2.7" fill="#333"/></svg>
<!-- p_dialog -->
<div class="b" style="left:335px;top:131px;width:354px;height:149px;background:#e0e0e0;border:1px solid #6e6e6e;border-top-color:#222;border-left-color:#555;"></div>
<div class="b" style="left:336px;top:149px;width:352px;height:1px;background:#ececec;"></div>
<div class="b" style="left:335px;top:131px;width:354px;height:18px;background:linear-gradient(#e2e2e2,#cfcfcf 40%,#a8a8a8);border:1px solid #262626;border-top-color:#1a1a1a;box-shadow:inset 0 1px 0 #ececec;"></div>
<span class="t" style="left:347.50px;top:136px;font-size:10.6px;color:#1a1a1a;transform:scaleX(0.9436);">Duplicate Layer</span>
<svg class="b" style="left:675px;top:135px;" width="9" height="9" viewBox="0 0 9 9"><path d="M1,1 L8,8 M8,1 L1,8" stroke="#1a1a1a" stroke-width="1.9" fill="none"/></svg>
<span class="t" style="left:367.50px;top:158px;font-size:10.6px;color:#222;transform:scaleX(0.9123);">Duplicate:</span>
<span class="t" style="left:417.30px;top:158px;font-size:10.6px;color:#222;transform:scaleX(0.9209);">Shape 1 copy</span>
<span class="t" style="left:397.50px;top:177px;font-size:10.6px;color:#222;transform:scaleX(0.8488);">As:</span>
<div class="b" style="left:416px;top:175px;width:200px;height:17px;background:#fff;border:1px solid #555;border-bottom-color:#999;border-right-color:#999;"></div>
<div class="b" style="left:420px;top:177px;width:62px;height:12px;background:#2f7be0;"></div>
<span class="t" style="left:421.50px;top:178px;font-size:10.6px;color:#fff;transform:scaleX(0.9224);">Shape 1 copy</span>
<div class="b" style="left:344px;top:205px;width:274px;height:63px;border:1px solid #c4c4c4;box-shadow:1px 1px 0 #f4f4f4, inset 1px 1px 0 #f4f4f4;"></div>
<div class="b" style="left:357px;top:199px;width:59px;height:12px;background:#e0e0e0;"></div>
<span class="t" style="left:362.00px;top:201px;font-size:10.6px;color:#222;transform:scaleX(0.9485);">Destination</span>
<span class="t" style="left:361.50px;top:221px;font-size:10.6px;color:#222;transform:scaleX(0.9560);">Document:</span>
<div class="b" style="left:362px;top:231px;width:6.5px;height:1px;background:#222;"></div>
<div class="b" style="left:414px;top:217px;width:197px;height:20px;background:linear-gradient(#f6f6f6,#e2e2e2 60%,#d6d6d6);border:1px solid #c0c0c0;border-radius:2px;"></div>
<span class="t" style="left:421.80px;top:222px;font-size:10.6px;color:#1a1a1a;transform:scaleX(0.9471);">Daffodils_Horizontal_edited-1.psd</span>
<svg class="b" style="left:597px;top:224.5px;" width="9" height="6" viewBox="0 0 9 6"><polygon points="0.3,0.5 8.7,0.5 4.5,5.5" fill="#5e5e5e"/></svg>
<span class="t" style="left:382.50px;top:245px;font-size:10.6px;color:#b0b0b0;transform:scaleX(0.8969);text-shadow:1px 1px 0 #f8f8f8;">Name:</span>
<div class="b" style="left:416px;top:245px;width:192px;height:16px;background:#dcdcdc;border:1px solid #9c9c9c;border-bottom-color:#c8c8c8;border-right-color:#c0c0c0;"></div>
<div class="b" style="left:630px;top:156px;width:50px;height:20px;background:linear-gradient(#f0f0f0,#cacaca 48%,#b4b4b4 52%,#dcdcdc);border:1px solid #6a6a6a;border-radius:1px;"></div>
<span class="t" style="left:649.00px;top:161px;font-size:10.6px;color:#1a1a1a;transform:scaleX(0.8488);">OK</span>
<div class="b" style="left:630px;top:182px;width:50px;height:19px;background:linear-gradient(#f8f8f8,#e6e6e6);border:1px solid #a4a4a4;border-radius:1px;"></div>
<span class="t" style="left:641.50px;top:187px;font-size:10.6px;color:#1a1a1a;transform:scaleX(0.9092);">Cancel</span>
<svg class="b" style="left:649px;top:163px;" width="10" height="18" viewBox="0 0 10 18"><path d="M1,1 L1,13.5 L3.8,10.8 L6,16 L8,15 L5.8,10 L9.5,9.8 Z" fill="#fff" stroke="#111" stroke-width="1" stroke-linejoin="round"/></svg>
<!-- p_frame -->
<div class="b" style="left:0px;top:0px;width:1024px;height:1px;background:#0a0a0a;"></div>
<div class="b" style="left:0px;top:0px;width:1px;height:576px;background:#1a1a1a;"></div>
<div class="b" style="left:1023px;top:0px;width:1px;height:576px;background:#1a1a1a;"></div>
<div class="b" style="left:0px;top:575px;width:1024px;height:1px;background:#0a0a0a;"></div>
</body></html>
